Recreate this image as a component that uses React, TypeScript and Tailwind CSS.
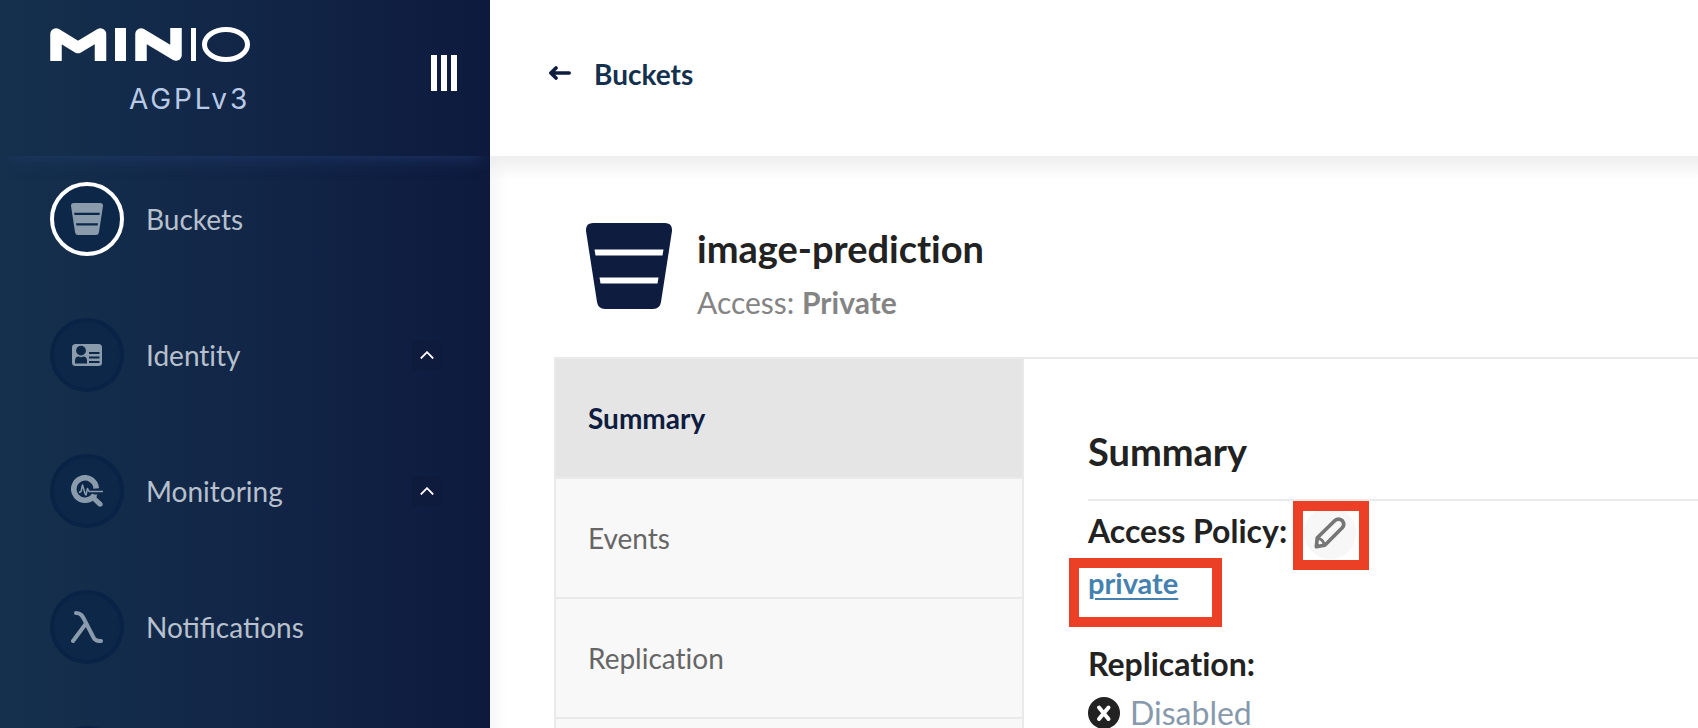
import React from "react";

const BucketIcon = ({ className }: { className: string }) => (
  <svg viewBox="0 0 86 86" className={className} fill="currentColor" aria-hidden="true">
    <path
      fillRule="evenodd"
      d="M7 0H79Q86.500 0 86 8L75 79Q74 86 67 86H19Q12 86 11 79L0 8Q-.5 0 7 0ZM8.500 26.500L9.500 32.500H76.500L77.500 26.500ZM13.500 54.500L14.500 60.500H71.500L72.500 54.500Z"
    />
  </svg>
);

const IdentityIcon = ({ className }: { className: string }) => (
  <svg viewBox="0 0 32 32" className={className} aria-hidden="true">
    <rect x="1" y="5" width="30" height="22" rx="3.5" fill="currentColor" />
    <g fill="#0d2747">
      <circle cx="10" cy="11.600" r="4.900" />
      <path d="M4 24.500V22Q4 17.600 8 17.600Q10 18.800 12 17.600Q16 17.600 16 22V24.500Z" />
      <rect x="18" y="13" width="10.500" height="2" />
      <rect x="18" y="17.500" width="10.500" height="2" />
      <rect x="18" y="22" width="10.500" height="2" />
    </g>
  </svg>
);

const MonitoringIcon = ({ className }: { className: string }) => (
  <svg viewBox="0 0 32 32" className={className} fill="none" stroke="currentColor" aria-hidden="true">
    <path d="M25.200 13.500A11.200 11.200 0 1 0 23.500 20" strokeWidth="5.600" />
    <path d="M20.500 19.500H26.500L25 22L31 27.500Q32.500 29.500 31 31Q29 32.500 27.200 31L21.500 25.500Z" fill="currentColor" stroke="none" />
    <path d="M8 17.500L10 16.500L11.500 10L14 18.500L15 20L16.500 13.500L18 16.500H32" strokeWidth="1.500" strokeLinejoin="round" />
  </svg>
);

const LambdaIcon = ({ className }: { className: string }) => (
  <svg viewBox="0 0 32 32" className={className} fill="none" stroke="currentColor" strokeWidth="4" strokeLinecap="round" strokeLinejoin="round" aria-hidden="true">
    <path d="M5 2C10 2 11.500 5 13.500 9L22 25.500Q24 30.500 30 30M15 12.500L2 30" />
  </svg>
);

const PencilIcon = ({ className }: { className: string }) => (
  <svg viewBox="0 0 34 34" className={className} fill="none" stroke="currentColor" strokeWidth="3.900" strokeLinejoin="round" aria-hidden="true">
    <path d="M2.500 31.500L3.500 22L22.500 3.500Q26 .8 30 3.800Q33.200 7.800 30 11.500L11.500 30Z" />
    <path d="M4 22.500Q9.500 23.500 11 29.500" strokeWidth="3" />
    <path d="M2 32L2.500 27.500L6.500 31.500Z" fill="currentColor" strokeWidth="1" />
  </svg>
);

const Logo = () => (
  <svg viewBox="0 0 200 36" className="block h-9 w-[200px]" role="img" aria-label="MinIO">
    <g fill="none" stroke="#fff" strokeLinejoin="round">
      <polyline points="6,34 6,7 28,20.500 50.500,7 50.500,34" strokeWidth="11.500" />
      <rect x="65" y="1" width="11" height="33" fill="#fff" stroke="none" />
      <polyline points="91,34 91,7 126,28 126,1" strokeWidth="11.500" />
      <rect x="141" y="1" width="5" height="33" fill="#fff" stroke="none" />
      <ellipse cx="176" cy="17.500" rx="21.500" ry="15" strokeWidth="5" />
    </g>
  </svg>
);

const navItems = [
  { id: "buckets", label: "Buckets", icon: BucketIcon, active: true, group: false },
  { id: "identity", label: "Identity", icon: IdentityIcon, active: false, group: true },
  { id: "monitoring", label: "Monitoring", icon: MonitoringIcon, active: false, group: true },
  { id: "notifications", label: "Notifications", icon: LambdaIcon, active: false, group: false },
  { id: "more", label: "", icon: BucketIcon, active: false, group: false },
];

const tabs = ["Summary", "Events", "Replication", ""];

function Sidebar() {
  return (
    <aside className="flex w-[490px] shrink-0 flex-col overflow-hidden bg-linear-to-r from-[#14304c] via-[#122648] to-[#0d1a3e]">
      <div className="flex h-[156px] shrink-0 items-start justify-between pr-[33px] pl-[50px] shadow-[0_10px_16px_-10px_#213a6c]">
        <div className="flex flex-col items-end pt-[27px]">
          <Logo />
          <span className="mt-[18px] font-[Inter,sans-serif] text-[28px] leading-9 tracking-widest text-[#b9c9e6]">
            AGPLv3
          </span>
        </div>
        <button aria-label="Collapse menu" className="mt-[55px] flex h-9 gap-1">
          <span className="w-1.5 bg-white" />
          <span className="w-1.5 bg-white" />
          <span className="w-1.5 bg-white" />
        </button>
      </div>
      <nav className="flex flex-col gap-[62px] pt-[26px] pr-12 pl-[50px]">
        {navItems.map(({ id, label, icon: Icon, active, group }) => (
          <button key={id} aria-label={label || id} className="flex items-center text-left text-[28px] leading-9 text-[#b7c0cc]">
            <span
              className={
                active
                  ? "flex size-[74px] items-center justify-center rounded-full border-4 border-white bg-[#0d2749]"
                  : "flex size-[74px] items-center justify-center rounded-full border-4 border-[#092347] bg-[#0d2749]"
              }
            >
              <Icon className="size-8 text-[#8a9bac]" />
            </span>
            <span
              className={
                id === "notifications"
                  ? "ml-[22px] grow [font-variant-ligatures:normal]"
                  : "ml-[22px] grow"
              }
            >
              {label}
            </span>
            {group && (
              <span className="flex size-[30px] items-center justify-center rounded bg-[#0f1b3c]">
                <svg viewBox="0 0 14 8" className="h-2 w-3.5" fill="none" stroke="#fff" strokeWidth="1.800" aria-hidden="true">
                  <path d="M.8 7.500L7 1.200L13.200 7.500" />
                </svg>
              </span>
            )}
          </button>
        ))}
      </nav>
    </aside>
  );
}

function SummaryPanel() {
  return (
    <section className="grow pt-[68px] pl-16 text-[#222]">
      <h2 className="border-b-2 border-[#eaeaea] pb-6 text-[38px] leading-[48px] font-bold">Summary</h2>
      <div className="flex h-16 items-center">
        <h3 className="pb-1 text-[32px] leading-10 font-bold">Access Policy:</h3>
        <button aria-label="Edit access policy" className="relative ml-[17px] flex size-[52px] items-center justify-center rounded-full bg-[#f7f7f7] text-[#767676]">
          <PencilIcon className="size-8" />
          <span className="absolute -top-1.5 -left-[11px] h-[69px] w-[76px] border-10 border-[#eb4026]" />
        </button>
      </div>
      <div className="flex h-[70px] items-start">
        <a href="#policy" className="relative text-[29px] leading-9 font-bold text-[#4581af] underline decoration-2 underline-offset-4">
          private
          <span className="absolute -top-[7px] -left-[19px] h-[69px] w-[153px] border-10 border-[#eb4026]" />
        </a>
      </div>
      <h3 className="mt-[9px] text-[32px] leading-10 font-bold">Replication:</h3>
      <div className="mt-[13px] flex items-center gap-2.5 text-[32px] leading-8 text-[#8799ac]">
        <svg viewBox="0 0 32 32" className="size-8" aria-hidden="true">
          <circle cx="16" cy="16" r="16" fill="#222" />
          <path d="M11 10.500L20.500 22M20.500 10.500L11 22" stroke="#fff" strokeWidth="4" strokeLinecap="round" />
        </svg>
        <span>Disabled</span>
      </div>
    </section>
  );
}

export default function App() {
  return (
    <div className="flex h-screen overflow-hidden bg-white font-[Lato,sans-serif] [font-variant-ligatures:none]">
      <Sidebar />
      <main className="flex min-w-0 grow flex-col">
        <header className="flex h-[156px] shrink-0 items-center pl-[59px]">
          <a href="#buckets" className="flex items-center gap-[23px] pb-2 text-[28px] leading-9 font-bold text-[#14304f]">
            <svg viewBox="0 0 22 14" className="mb-0.5 h-3.5 w-[22px]" fill="none" stroke="#0e1c40" strokeWidth="3.600" strokeLinecap="round" strokeLinejoin="round" aria-hidden="true">
              <path d="M20.200 7H2M7 1.900L1.900 7L7 12.100" />
            </svg>
            Buckets
          </a>
        </header>
        <div className="flex grow flex-col bg-[linear-gradient(to_bottom,#eeeeee_0px,transparent_24px),linear-gradient(to_right,#f7f7f7_0px,transparent_18px)] pl-16">
          <div className="flex h-[201px] shrink-0 items-start gap-[25px] pt-[67px] pl-8">
            <BucketIcon className="size-[86px] text-[#0e1c40]" />
            <div className="-mt-1">
              <h1 className="text-[38px] leading-[58px] font-bold text-[#222]">image-prediction</h1>
              <p className="text-[30px] leading-[50px] text-[#848484]">
                Access: <strong>Private</strong>
              </p>
            </div>
          </div>
          <div className="flex grow border-t-2 border-l-2 border-[#eaeaea] bg-white">
            <div className="flex w-[468px] shrink-0 flex-col border-r-2 border-[#eaeaea] bg-[#f8f8f8]">
              {tabs.map((tab, i) => (
                <button
                  key={i}
                  className={
                    i === 0
                      ? "h-[120px] shrink-0 border-b-2 border-[#eaeaea] bg-[#e5e5e5] pl-8 text-left text-[28px] font-bold text-[#0e1c40]"
                      : "h-[120px] shrink-0 border-b-2 border-[#eaeaea] pl-8 text-left text-[28px] text-[#666]"
                  }
                >
                  {tab}
                </button>
              ))}
            </div>
            <SummaryPanel />
          </div>
        </div>
      </main>
    </div>
  );
}
